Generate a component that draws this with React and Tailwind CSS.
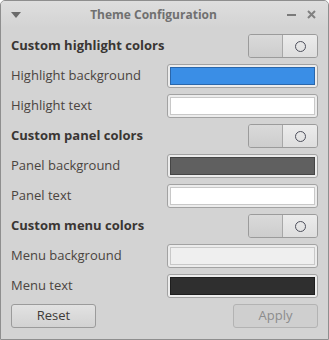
import React from "react";

const font = { fontFamily: '"Open Sans", "Noto Sans", sans-serif' };

function Toggle() {
  return (
    <div className="flex h-[24px] w-[70px] overflow-hidden rounded-[3px] border border-[#9b9b9b]">
      <div className="w-[34px] border-r border-[#a8a8a8] bg-gradient-to-b from-[#dadada] to-[#cdcdcd]" />
      <div className="flex flex-1 items-center justify-center bg-gradient-to-b from-[#ececec] to-[#dedede]">
        <div className="h-[11px] w-[11px] rounded-full border border-[#4d4f5c]" />
      </div>
    </div>
  );
}

function Swatch({ color, edge }) {
  return (
    <div className="flex h-[24px] flex-1 rounded-[3px] border border-[#a2a2a2] bg-[#ececec] p-[2px]">
      <div className={`flex-1 border ${color} ${edge}`} />
    </div>
  );
}

function Heading({ text }) {
  return (
    <div className="flex h-[24px] items-center justify-between">
      <span className="text-[13px] font-bold text-[#3a3633]">{text}</span>
      <Toggle />
    </div>
  );
}

function Row({ label, color, edge }) {
  return (
    <div className="flex h-[24px] items-center">
      <span className="w-[156px] text-[13px] text-[#4a4440]">{label}</span>
      <Swatch color={color} edge={edge} />
    </div>
  );
}

export default function App() {
  return (
    <div
      className="flex h-[340px] w-[329px] flex-col overflow-hidden rounded-t-[5px] border border-[#8e8e8e] bg-[#d3d3d3]"
      style={font}
    >
      <div className="flex h-[27px] items-center bg-gradient-to-b from-[#dedede] to-[#d3d3d3]">
        <div className="flex w-[28px] justify-center pl-[2px]">
          <svg width="10" height="6" viewBox="0 0 10 6">
            <path d="M0 0 L10 0 L5 6 Z" fill="#6a6a6a" />
          </svg>
        </div>
        <div className="flex-1 text-center text-[12px] font-bold text-[#707070]">
          Theme Configuration
        </div>
        <div className="flex w-[50px] items-center gap-[11px] pl-[9px]">
          <div className="h-[2px] w-[9px] bg-[#7a7a7a]" />
          <svg width="9" height="9" viewBox="0 0 9 9">
            <path d="M1 1 L8 8 M8 1 L1 8" stroke="#808080" strokeWidth="2" />
          </svg>
        </div>
      </div>
      <div className="flex flex-col gap-[6px] px-[10px] pt-[6px]">
        <Heading text="Custom highlight colors" />
        <Row label="Highlight background" color="bg-[#3a8ee6]" edge="border-[#2a66aa]" />
        <Row label="Highlight text" color="bg-[#ffffff]" edge="border-[#c8c8c8]" />
        <Heading text="Custom panel colors" />
        <Row label="Panel background" color="bg-[#606060]" edge="border-[#454545]" />
        <Row label="Panel text" color="bg-[#ffffff]" edge="border-[#c8c8c8]" />
        <Heading text="Custom menu colors" />
        <Row label="Menu background" color="bg-[#efefef]" edge="border-[#c8c8c8]" />
        <Row label="Menu text" color="bg-[#2f2f2f]" edge="border-[#1e1e1e]" />
        <div className="flex h-[24px] justify-between">
          <button className="w-[85px] rounded-[3px] border border-[#9b9b9b] bg-gradient-to-b from-[#e2e2e2] to-[#d2d2d2] text-[13px] text-[#3e3a37]">
            Reset
          </button>
          <button className="w-[85px] rounded-[3px] border border-[#b3b3b3] bg-[#cfcfcf] text-[13px] text-[#8c8c8c]">
            Apply
          </button>
        </div>
      </div>
    </div>
  );
}
